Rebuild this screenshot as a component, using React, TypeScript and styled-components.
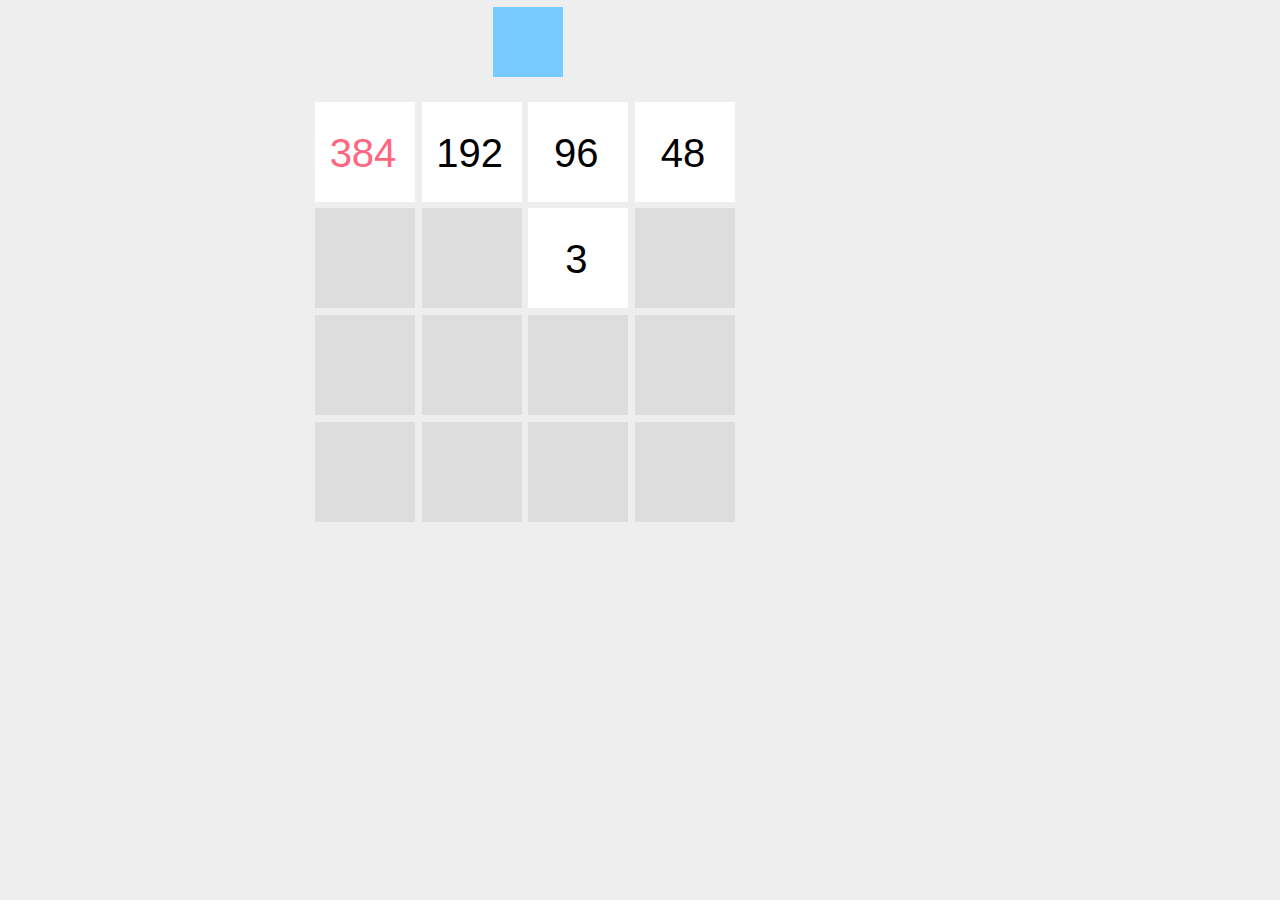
import React from "react";
import styled, { createGlobalStyle } from "styled-components";

const Global = createGlobalStyle`
  html, body { margin: 0; padding: 0; background: #eeeeee; }
  body { font-family: "Liberation Sans", Arial, Helvetica, sans-serif; }
`;

const Page = styled.div`
  min-height: 900px;
  padding: 6.67px 0 0 315px;
  box-sizing: border-box;
`;

const Board = styled.div`
  width: 420px;
  display: flex;
  flex-direction: column;
  gap: 25px;
`;

const NextRow = styled.div`
  display: flex;
  padding-left: 178.33px;
`;

const NextTile = styled.div<{ $color: string }>`
  width: 70px;
  height: 70px;
  background: ${(p) => p.$color};
`;

const Grid = styled.div`
  display: grid;
  grid-template-columns: repeat(4, 100px);
  grid-auto-rows: 100px;
  gap: 6.67px;
`;

const Cell = styled.div<{ $filled: boolean; $accent?: boolean }>`
  background: ${(p) => (p.$filled ? "#ffffff" : "#dddddd")};
  color: ${(p) => (p.$accent ? "#ff6680" : "#000000")};
  display: flex;
  align-items: center;
  justify-content: center;
  padding: 2px 4px 0 0;
  box-sizing: border-box;
  font-size: 40px;
  line-height: 1;
`;

const cells: (number | null)[] = [
  384, 192, 96, 48,
  null, null, 3, null,
  null, null, null, null,
  null, null, null, null,
];

export default function App() {
  const max = Math.max(...cells.map((c) => c ?? 0));
  return (
    <Page>
      <Global />
      <Board>
        <NextRow>
          <NextTile $color="#77cbff" />
        </NextRow>
        <Grid>
          {cells.map((v, i) => (
            <Cell key={i} $filled={v !== null} $accent={v === max}>
              {v ?? ""}
            </Cell>
          ))}
        </Grid>
      </Board>
    </Page>
  );
}
